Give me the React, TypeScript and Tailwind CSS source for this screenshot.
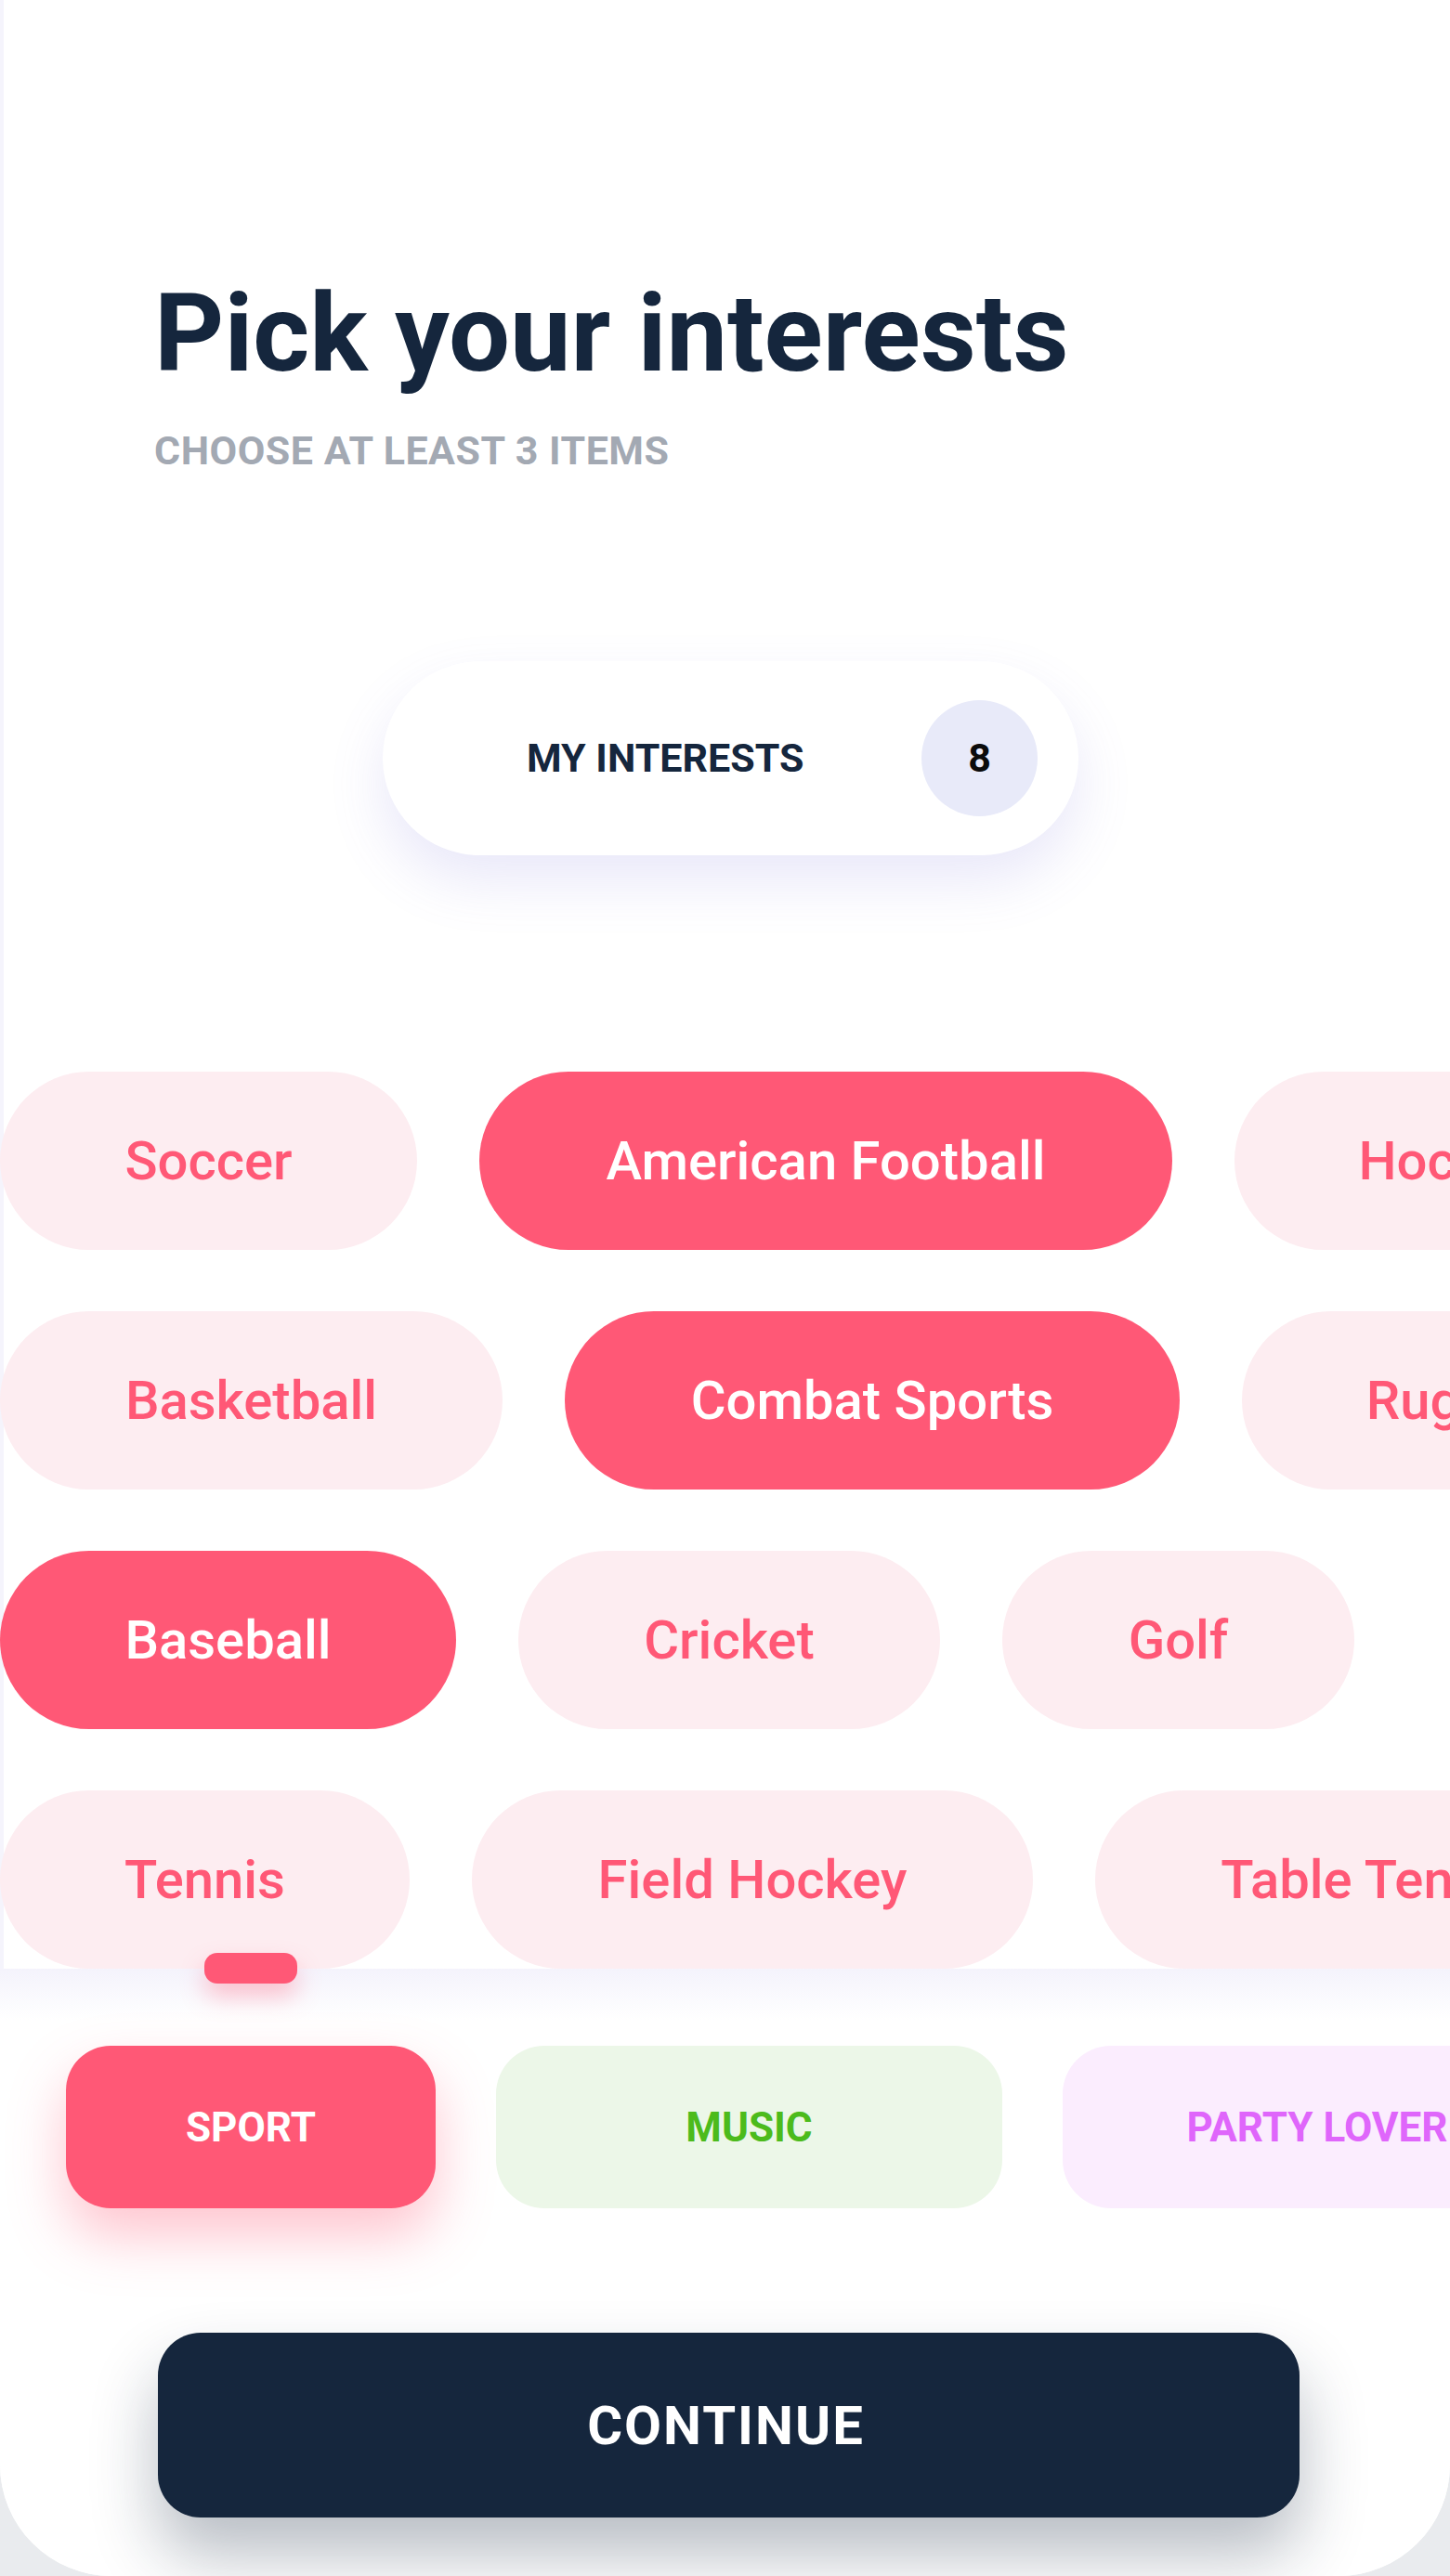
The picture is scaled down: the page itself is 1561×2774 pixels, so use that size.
import React from 'react';

type Item = { label: string; w: string; on?: boolean };

const rows: Item[][] = [
  [
    { label: 'Soccer', w: 'w-[449px]' },
    { label: 'American Football', w: 'w-[746px]', on: true },
    { label: 'Hockey', w: 'w-[460px]' },
  ],
  [
    { label: 'Basketball', w: 'w-[541px]' },
    { label: 'Combat Sports', w: 'w-[662px]', on: true },
    { label: 'Rugby', w: 'w-[430px]' },
  ],
  [
    { label: 'Baseball', w: 'w-[491px]', on: true },
    { label: 'Cricket', w: 'w-[454px]' },
    { label: 'Golf', w: 'w-[379px]' },
  ],
  [
    { label: 'Tennis', w: 'w-[441px]' },
    { label: 'Field Hockey', w: 'w-[604px]' },
    { label: 'Table Tennis', w: 'w-[598px]' },
  ],
];

function Chip({ item }: { item: Item }) {
  return (
    <div
      className={`flex h-[192px] shrink-0 items-center justify-center rounded-full text-[58px] font-medium leading-none whitespace-nowrap ${item.w} ${
        item.on ? 'bg-[#ff5876] text-white' : 'bg-[#fdedf1] text-[#ff5876]'
      }`}
    >
      {item.label}
    </div>
  );
}

export default function App() {
  return (
    <div className="min-h-screen bg-[#e9ebee] font-['Roboto',sans-serif]">
      <div className="flex h-[2774px] w-[1561px] flex-col overflow-hidden rounded-b-[120px] bg-white">
        {/* top: title, counter, chips */}
        <section className="border-l-4 border-[#f5f4fc] pt-[301px]">
          <h1 className="pl-[162px] text-[117px] font-bold leading-none text-[#15263d]">
            Pick your interests
          </h1>
          <p className="mt-[46px] pl-[162px] text-[43px] font-bold uppercase leading-none tracking-[0.5px] text-[#a3a9b3]">
            Choose at least 3 items
          </p>

          <div className="ml-[408px] mt-[205px] flex h-[209px] w-[749px] items-center justify-between rounded-full bg-white pl-[155px] pr-[44px] shadow-[0_28px_60px_rgba(120,110,220,0.16)]">
            <span className="text-[43px] font-bold leading-none text-[#15263d]">MY INTERESTS</span>
            <span className="flex h-[125px] w-[125px] items-center justify-center rounded-full bg-[#e8eaf9] text-[43px] font-bold leading-none text-[#0b0b0b]">
              8
            </span>
          </div>

          <div className="-ml-[4px] mt-[233px] flex flex-col gap-[66px]">
            {rows.map((row, i) => (
              <div key={i} className="flex gap-[67px] overflow-hidden">
                {row.map((item) => (
                  <Chip key={item.label} item={item} />
                ))}
              </div>
            ))}
          </div>
        </section>

        {/* bottom panel: categories + continue */}
        <section className="relative flex-1 bg-[linear-gradient(to_bottom,#f4f3fc_0px,#ffffff_55px)]">
          <div className="absolute left-[220px] top-[-17px] h-[33px] w-[100px] rounded-[14px] bg-[#ff5876] shadow-[0_14px_26px_rgba(255,88,118,0.35)]" />

          <div className="ml-[71px] mt-[83px] flex gap-[65px]">
            <div className="flex h-[175px] w-[398px] shrink-0 items-center justify-center rounded-[48px] bg-[#ff5876] text-[44px] font-bold leading-none text-white shadow-[0_30px_60px_rgba(255,88,118,0.35)]">
              SPORT
            </div>
            <div className="flex h-[175px] w-[545px] shrink-0 items-center justify-center rounded-[52px] bg-[#ecf7e8] text-[44px] font-bold leading-none text-[#4cbb1c]">
              MUSIC
            </div>
            <div className="flex h-[175px] w-[540px] shrink-0 items-center justify-center rounded-[52px] bg-[#fbedfe] pl-[8px] text-[44px] font-bold leading-none whitespace-nowrap text-[#df66fb]">
              PARTY LOVER
            </div>
          </div>

          <button className="ml-[170px] mt-[134px] flex h-[199px] w-[1229px] items-center justify-center rounded-[46px] bg-[#15263d] pr-[6px] text-[58px] font-bold leading-none tracking-[2px] text-white shadow-[0_40px_70px_rgba(21,38,61,0.3)]">
            CONTINUE
          </button>
        </section>
      </div>
    </div>
  );
}
